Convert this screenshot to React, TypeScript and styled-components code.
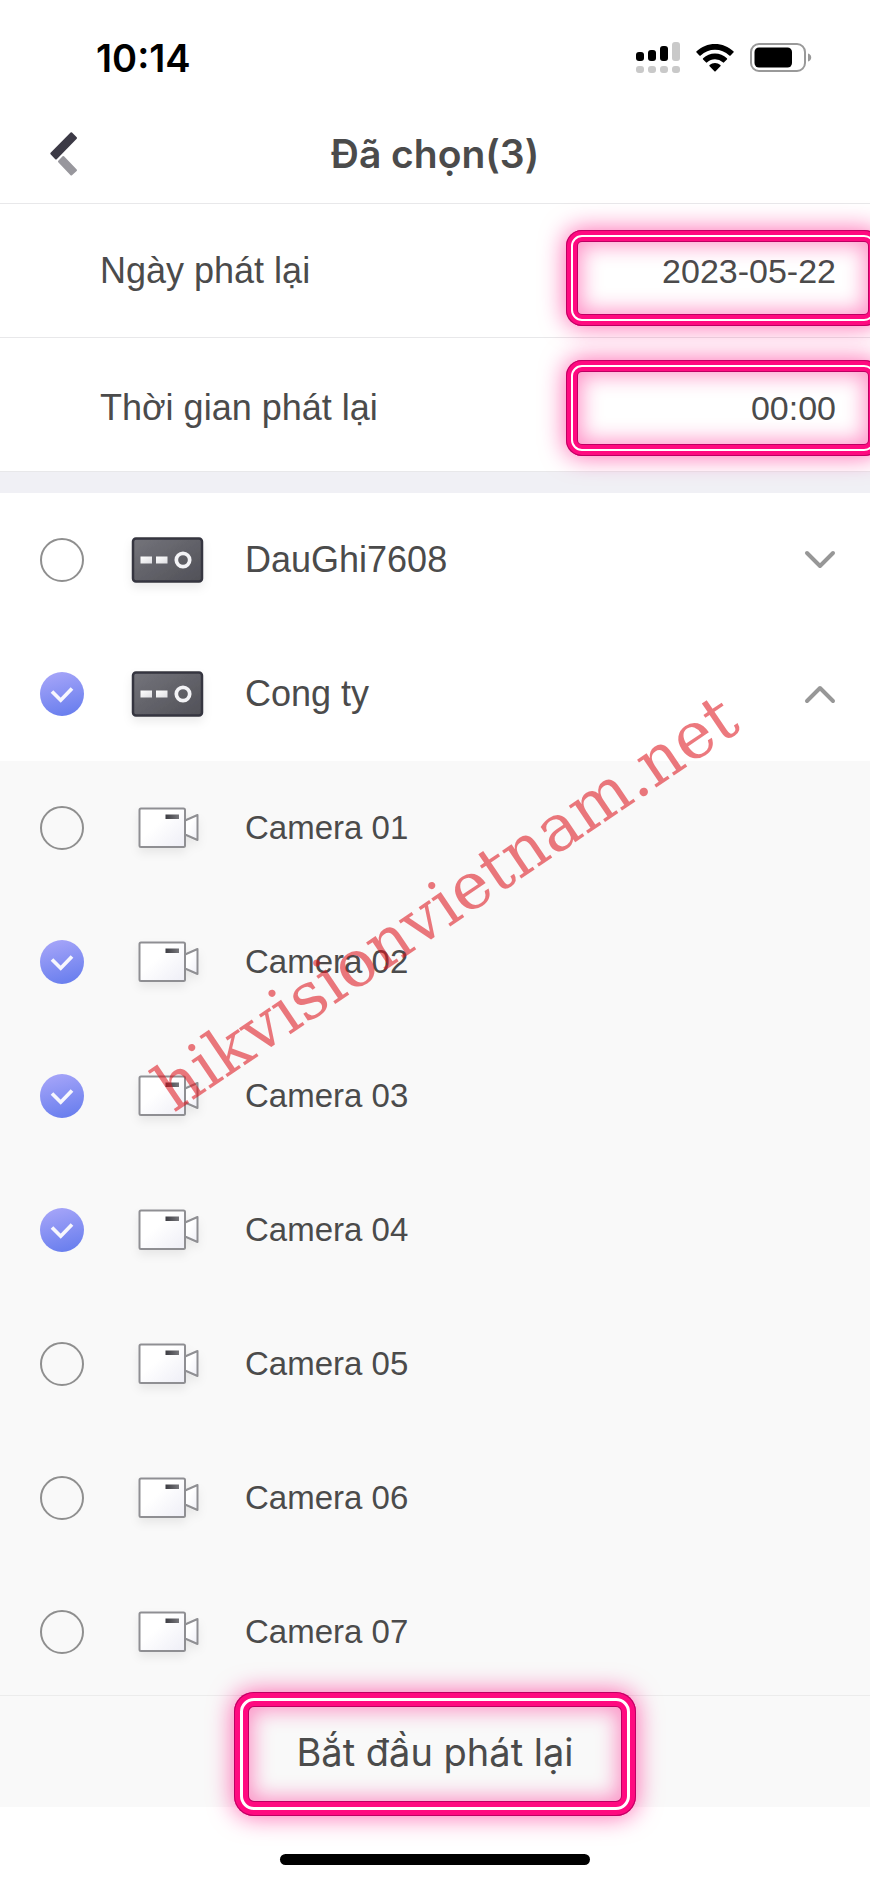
import React, { useState } from "react";
import styled, { createGlobalStyle, css } from "styled-components";

const ink = "#4b4b4b";
const line = "#e8e8ea";
const sans = '"Liberation Sans", Arial, sans-serif';
const display = 'Inter, "Liberation Sans", sans-serif';

const GlobalStyle = createGlobalStyle`
  *, *::before, *::after { box-sizing: border-box; }
  body { margin: 0; background: #fff; color: ${ink}; font-family: ${sans}; }
  button, input { font: inherit; color: inherit; background: none; border: 0; padding: 0; margin: 0; }
  button { cursor: pointer; }
  h1, ul { margin: 0; padding: 0; }
  ul { list-style: none; }
  svg { display: block; }
`;

const Screen = styled.div`
  position: relative;
  min-height: 100vh;
  overflow: hidden;
  display: flex;
  flex-direction: column;
`;

const StatusBar = styled.div`
  height: 104px;
  padding: 12px 58px 0 96px;
  display: flex;
  align-items: center;
  justify-content: space-between;
`;

const Clock = styled.time`
  font: 600 38px/44px ${display};
  color: #000;
`;

const StatusIcons = styled.div`
  display: flex;
  align-items: center;
  gap: 16px;
`;

const Header = styled.header`
  height: 100px;
  padding: 0 48px;
  display: grid;
  grid-template-columns: 32px 1fr 32px;
  align-items: center;
  border-bottom: 1px solid ${line};
`;

const Title = styled.h1`
  font: 600 39px/48px ${display};
  text-align: center;
`;

const SettingRow = styled.div<{ $lowered?: boolean }>`
  position: relative;
  height: 134px;
  padding: ${(p) => (p.$lowered ? 6 : 0)}px 34px 0 100px;
  display: flex;
  align-items: center;
  justify-content: space-between;
  border-bottom: 1px solid ${line};
`;

const SettingLabel = styled.label`
  font-size: 36px;
  line-height: 44px;
`;

const SettingInput = styled.input`
  width: 240px;
  height: 44px;
  font-size: 34px;
  line-height: 44px;
  text-align: right;
  outline: none;
`;

const Separator = styled.div`
  height: 21px;
  background: #f0f0f5;
`;

/* Neon tube: pink band, white core, pink band, with a soft glow on both sides */
const neon = css<{ $band: number; $core: number }>`
  pointer-events: none;
  box-shadow:
    inset 0 0 0 1px #bd0063,
    inset 0 0 0 ${(p) => p.$band}px #ff0a80,
    inset 0 0 0 ${(p) => p.$band + p.$core}px #fff,
    inset 0 0 0 ${(p) => p.$band * 2 + p.$core - 1}px #ff0a80,
    inset 0 0 0 ${(p) => p.$band * 2 + p.$core}px #bd0063,
    inset 0 0 20px ${(p) => p.$band * 2 + p.$core + 4}px rgba(255, 10, 128, 0.42),
    0 0 24px 1px rgba(255, 10, 128, 0.6);
`;

const FieldHighlight = styled.span<{ $band: number; $core: number; $top: number }>`
  ${neon}
  position: absolute;
  z-index: 1;
  top: ${(p) => p.$top}px;
  right: -10px;
  width: 314px;
  height: 96px;
  border-radius: 16px;
`;

const ButtonHighlight = styled.span<{ $band: number; $core: number }>`
  ${neon}
  position: absolute;
  z-index: 1;
  top: -4px;
  left: calc(50% - 201px);
  width: 402px;
  height: 124px;
  border-radius: 20px;
`;

const List = styled.ul<{ $nested?: boolean }>`
  background: ${(p) => (p.$nested ? "#f9f9f9" : "#fff")};
`;

const Row = styled.li<{ $small?: boolean }>`
  height: 134px;
  padding: 0 34px 0 40px;
  display: grid;
  grid-template-columns: 44px 72px 1fr 32px;
  column-gap: 48px;
  align-items: center;
  font-size: ${(p) => (p.$small ? 33 : 36)}px;
  line-height: 44px;
`;

const Name = styled.label`
  margin-left: -7px;
`;

const Tick = styled.span`
  display: grid;
  > * { grid-area: 1 / 1; }
  svg { pointer-events: none; }
`;

const TickInput = styled.input`
  appearance: none;
  width: 44px;
  height: 44px;
  border: 2px solid #8f8f8f;
  border-radius: 50%;
  &:checked {
    border: 0;
    background: linear-gradient(165deg, #a3a3f8 10%, #6a7fee 90%);
  }
`;

const IconButton = styled.button`
  display: grid;
  place-items: center;
  width: 32px;
  height: 48px;
`;

const Footer = styled.footer`
  position: relative;
  margin-top: -4px;
  height: 112px;
  display: flex;
  background: #f9f9f9;
  border-top: 1px solid #ececec;
`;

const PlayButton = styled.button`
  flex: 1;
  font: 400 38px/48px ${display};
`;

const HomeArea = styled.div`
  height: 76px;
  padding-top: 28px;
  display: flex;
  align-items: center;
  justify-content: center;
`;

const HomeIndicator = styled.div`
  width: 310px;
  height: 11px;
  border-radius: 6px;
  background: #000;
`;

const Watermark = styled.div`
  position: absolute;
  z-index: 2;
  top: 1057px;
  left: calc(50% - 261px);
  font: 65px/68px "DejaVu Serif", serif;
  white-space: nowrap;
  color: rgba(222, 20, 28, 0.57);
  transform: rotate(-34deg);
  transform-origin: 0 57px;
  pointer-events: none;
`;

const SignalIcon = () => (
  <svg width="44" height="32" viewBox="0 0 44 32" aria-hidden="true">
    <rect x="0" y="10" width="8" height="9" rx="3" />
    <rect x="12" y="8" width="8" height="11" rx="3" />
    <rect x="24" y="4" width="8" height="15" rx="3" />
    <g fill="#c9c9c9">
      <rect x="36" y="0" width="8" height="19" rx="3" />
      <rect x="0" y="24" width="8" height="7" rx="3" />
      <rect x="12" y="24" width="8" height="7" rx="3" />
      <rect x="24" y="24" width="8" height="7" rx="3" />
      <rect x="36" y="24" width="8" height="7" rx="3" />
    </g>
  </svg>
);

const WifiIcon = () => (
  <svg width="38" height="28" viewBox="0 0 38 28" aria-hidden="true">
    <path d="M19 0C26 0 32.5 2.6 37.4 7.3a.9.9 0 0 1 0 1.3l-2.8 2.8a.9.9 0 0 1-1.3 0C29.4 7.7 24.3 5.7 19 5.7S8.6 7.7 4.7 11.4a.9.9 0 0 1-1.3 0L.6 8.6a.9.9 0 0 1 0-1.3C5.5 2.6 12 0 19 0Z" />
    <path d="M19 9.5c4.5 0 8.7 1.7 11.9 4.7a.9.9 0 0 1 0 1.3l-2.8 2.8a.9.9 0 0 1-1.3 0A11.5 11.5 0 0 0 19 15.2c-2.9 0-5.7 1.1-7.8 3.1a.9.9 0 0 1-1.3 0l-2.8-2.8a.9.9 0 0 1 0-1.3A17.3 17.3 0 0 1 19 9.5Z" />
    <path d="M19 19c2 0 3.9.7 5.4 2a.9.9 0 0 1 0 1.3l-4.8 4.9a.9.9 0 0 1-1.2 0l-4.8-4.9a.9.9 0 0 1 0-1.3c1.5-1.3 3.4-2 5.4-2Z" />
  </svg>
);

const BatteryIcon = () => (
  <svg width="62" height="30" viewBox="0 0 62 30" aria-hidden="true">
    <rect x="1" y="1" width="54" height="27" rx="8" fill="none" stroke="#999" strokeWidth="2" />
    <rect x="4.5" y="4.5" width="37.5" height="20" rx="4.5" />
    <path d="M58 10.5c2 .4 3.2 2 3.2 4s-1.2 3.6-3.2 4Z" fill="#999" />
  </svg>
);

const BackIcon = () => (
  <svg width="32" height="46" viewBox="0 0 32 46" strokeWidth="2" strokeLinejoin="round" aria-hidden="true">
    <path d="M23.3 2.3 28 7 8 27.5 3.3 22.5Z" fill="#3c3a46" stroke="#3c3a46" />
    <path d="M15.3 26 28 39.2 23.3 43.5 11 30.5Z" fill="#98979d" stroke="#98979d" />
  </svg>
);

const CheckMark = () => (
  <svg width="44" height="44" viewBox="0 0 44 44" fill="none" stroke="#f7f7fd" strokeWidth="3.7" aria-hidden="true">
    <path d="m12 19.5 8.7 8.7L32 16.5" />
  </svg>
);

const RecorderIcon = () => (
  <svg width="72" height="46" viewBox="0 0 72 46" overflow="visible" aria-hidden="true">
    <defs>
      <linearGradient id="rec" x1="0" y1="0" x2="1" y2="1">
        <stop offset="0" stopColor="#74747b" />
        <stop offset="1" stopColor="#505057" />
      </linearGradient>
      <linearGradient id="led" x1="0" y1="0" x2="1" y2="1">
        <stop offset="0" stopColor="#fff" />
        <stop offset="1" stopColor="#dedee2" />
      </linearGradient>
      <filter id="recShadow" x="-20%" y="-20%" width="140%" height="160%">
        <feDropShadow dx="0" dy="5" stdDeviation="5" floodColor="#000" floodOpacity=".08" />
      </filter>
    </defs>
    <rect x="1" y="1.5" width="69" height="43" rx="3" fill="url(#rec)" stroke="#34343f" strokeWidth="2.5" filter="url(#recShadow)" />
    <rect x="8.5" y="19.5" width="11.5" height="7" fill="url(#led)" />
    <rect x="24" y="19.5" width="11.5" height="7" fill="url(#led)" />
    <circle cx="51" cy="23" r="6.7" fill="none" stroke="#f3f3f6" strokeWidth="3.7" />
  </svg>
);

const CameraIcon = () => (
  <svg width="72" height="42" viewBox="0 0 72 42" overflow="visible" aria-hidden="true">
    <defs>
      <linearGradient id="cam" x1="0" y1="0" x2="1" y2="1">
        <stop offset=".4" stopColor="#fff" />
        <stop offset="1" stopColor="#eeeef6" />
      </linearGradient>
      <linearGradient id="camLed" x1="0" y1="0" x2="1" y2="0">
        <stop offset="0" stopColor="#3c3c42" />
        <stop offset="1" stopColor="#77777c" />
      </linearGradient>
      <filter id="camShadow" x="-20%" y="-20%" width="140%" height="160%">
        <feDropShadow dx="0" dy="5" stdDeviation="5" floodColor="#000" floodOpacity=".07" />
      </filter>
    </defs>
    <g fill="url(#cam)" stroke="#8f8f93" strokeWidth="2" strokeLinejoin="round" filter="url(#camShadow)">
      <path d="M53 13.5 65.5 8v25L53 27.5Z" />
      <rect x="7.5" y="1.5" width="45.5" height="38.5" rx="1.5" />
    </g>
    <rect x="33.5" y="7.5" width="13.5" height="4.5" fill="url(#camLed)" />
  </svg>
);

const Chevron = ({ up }: { up: boolean }) => (
  <svg width="32" height="20" viewBox="0 0 32 20" fill="none" stroke="#979797" strokeWidth="4" strokeLinecap="round" strokeLinejoin="round" aria-hidden="true">
    <path d={up ? "M3 17 16 4l13 13" : "M3 3l13 13L29 3"} />
  </svg>
);

type Item = { id: string; name: string; open?: boolean };

const devices: Item[] = [
  { id: "rec1", name: "DauGhi7608", open: false },
  { id: "rec2", name: "Cong ty", open: true },
];

const cameras: Item[] = [1, 2, 3, 4, 5, 6, 7].map((n) => ({ id: `cam${n}`, name: `Camera 0${n}` }));

export default function App() {
  const [checked, setChecked] = useState(new Set(["rec2", "cam2", "cam3", "cam4"]));
  const toggle = (id: string) =>
    setChecked((prev) => {
      const next = new Set(prev);
      if (!next.delete(id)) next.add(id);
      return next;
    });

  const renderRow = (item: Item) => {
    const isDevice = item.open !== undefined;
    return (
      <Row key={item.id} $small={!isDevice}>
        <Tick>
          <TickInput type="checkbox" id={item.id} checked={checked.has(item.id)} onChange={() => toggle(item.id)} />
          {checked.has(item.id) && <CheckMark />}
        </Tick>
        {isDevice ? <RecorderIcon /> : <CameraIcon />}
        <Name htmlFor={item.id}>{item.name}</Name>
        {isDevice && (
          <IconButton type="button" aria-label={item.name} aria-expanded={item.open}>
            <Chevron up={!!item.open} />
          </IconButton>
        )}
      </Row>
    );
  };

  return (
    <>
      <GlobalStyle />
      <Screen>
        <StatusBar>
          <Clock>10:14</Clock>
          <StatusIcons>
            <SignalIcon />
            <WifiIcon />
            <BatteryIcon />
          </StatusIcons>
        </StatusBar>
        <Header>
          <IconButton type="button" aria-label="Back">
            <BackIcon />
          </IconButton>
          <Title>Đã chọn(3)</Title>
        </Header>
        <SettingRow>
          <SettingLabel htmlFor="date">Ngày phát lại</SettingLabel>
          <SettingInput id="date" defaultValue="2023-05-22" />
          <FieldHighlight $band={5} $core={2} $top={26} />
        </SettingRow>
        <SettingRow $lowered>
          <SettingLabel htmlFor="time">Thời gian phát lại</SettingLabel>
          <SettingInput id="time" defaultValue="00:00" />
          <FieldHighlight $band={5} $core={2} $top={22} />
        </SettingRow>
        <Separator />
        <List>{devices.map(renderRow)}</List>
        <List $nested>{cameras.map(renderRow)}</List>
        <Footer>
          <PlayButton type="button">Bắt đầu phát lại</PlayButton>
          <ButtonHighlight $band={6} $core={3} />
        </Footer>
        <HomeArea>
          <HomeIndicator />
        </HomeArea>
        <Watermark>hikvisionvietnam.net</Watermark>
      </Screen>
    </>
  );
}
